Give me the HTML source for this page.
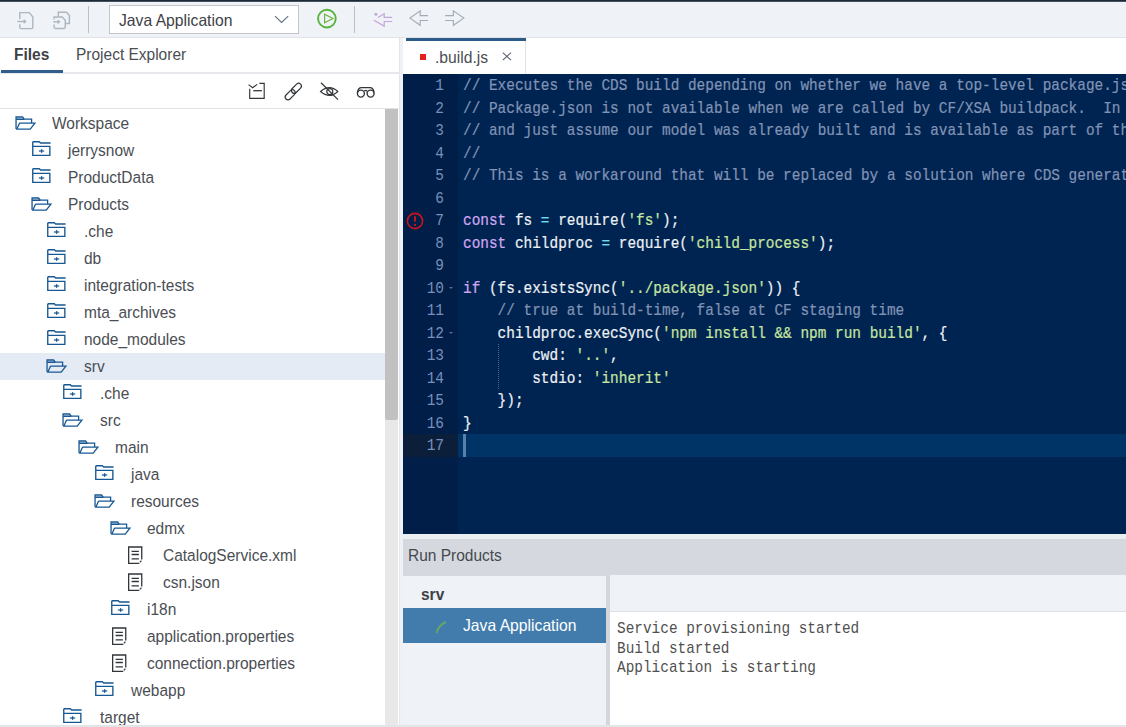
<!DOCTYPE html>
<html><head><meta charset="utf-8">
<style>
*{box-sizing:border-box;margin:0;padding:0}
html,body{width:1126px;height:727px;overflow:hidden;background:#fff;font-family:"Liberation Sans",sans-serif;color:#32363a}
.a{position:absolute}
#topline{left:0;top:0;width:1126px;height:2px;background:linear-gradient(#1b2835 0,#1b2835 60%,#8a939c 100%)}
#toolbar{left:0;top:2px;width:1126px;height:35.7px;background:#eff2f6;border-bottom:1.7px solid #dfe2e6}
.sep{width:1.2px;background:#b9c0c7;top:6px;height:27px}
#dd{left:109px;top:5px;width:190px;height:29px;background:#fff;border:1px solid #c3c6c9;font-size:16.5px;color:#3d4146}
#dd span{position:absolute;left:9.3px;top:5.1px;transform:scaleX(0.951);transform-origin:0 0;white-space:nowrap}
#left{left:0;top:37.7px;width:399px;height:690px;background:#fff}
#scroll{left:385px;top:109px;width:13.3px;height:618px;background:#e8e8e8}
#thumb{left:385px;top:109px;width:13.3px;height:311px;background:#c1c1c1;border-radius:0 0 2px 2px}
#gut{left:399.6px;top:37.7px;width:3.4px;height:690px;background:#eef1f5}
.tt{font-size:16.3px;line-height:27px;height:27px;color:#4a4e53;white-space:nowrap;transform:scaleX(0.951);transform-origin:0 0}
.s{transform:scaleX(0.951);transform-origin:0 0;white-space:nowrap}
.sel{background:#e4ebf5}
#code{left:403px;top:74px;width:723px;height:460px;background:#002451;overflow:hidden}
#gutter{left:0;top:0;width:55px;height:460px;background:#001e48}
.ln{position:absolute;left:0;width:41px;text-align:right;font-family:"Liberation Mono",monospace;font-size:15.7px;color:#7890bb;height:22.5px;line-height:25px;transform:scaleX(0.919);transform-origin:100% 0}
.cl{-webkit-text-stroke:0.2px currentColor;position:absolute;left:60px;font-family:"Liberation Mono",monospace;font-size:15.7px;color:#eef1f5;height:22.5px;line-height:25px;white-space:pre;transform:scaleX(0.919);transform-origin:0 0}
.fold{position:absolute;left:45.6px;width:0;height:0;border-left:2.2px solid transparent;border-right:2.2px solid transparent;border-top:2.4px solid #5a6d92;margin-top:10.3px}
.cm{color:#8293b5}.kw{color:#d3a8f2}.op{color:#72dbe9}.st{color:#c8e6a0}
#strip{left:403px;top:534px;width:723px;height:5px;background:#eceff2}
#runh{left:403px;top:539px;width:723px;height:37px;background:#d5d9df;font-size:16.3px;color:#3d4146}
#runl{left:403px;top:576px;width:203px;height:151px;background:#eff2f6}
#split{left:605.5px;top:576px;width:4.5px;height:151px;background:#d3d6da}
#runr{left:610px;top:575px;width:516px;height:36.5px;background:#eff2f6;border-bottom:1px solid #dde1e6}
#out{left:610px;top:611.5px;width:516px;height:113.5px;background:#fff;overflow:hidden}
#outt{position:absolute;left:6.5px;top:8.5px;font-family:"Liberation Mono",monospace;font-size:15.7px;color:#505050;white-space:pre;line-height:19.5px;transform:scaleX(0.919);transform-origin:0 0}
#bottomline{left:0;top:725px;width:1126px;height:2px;background:#e3e5e8}
.ti{position:absolute}
</style></head><body>
<div class="a" id="topline"></div>
<div class="a" id="toolbar"></div>
<!-- toolbar icons -->
<svg class="a" style="left:16px;top:10px" width="20" height="20" viewBox="0 0 20 20"><g fill="none" stroke="#adb7c2" stroke-width="1.45"><path d="M3.8 8.9V2.6H13.1L16.8 6.7V17.2Q16.8 18.6 15.4 18.6H5.2Q3.8 18.6 3.8 17.2V14.2"/><path d="M1.3 11.5H9.4"/><path d="M7.6 9.8L9.6 11.5L7.6 13.2" stroke-width="1.3"/></g></svg>
<svg class="a" style="left:52px;top:10px" width="20" height="20" viewBox="0 0 20 20"><g fill="none" stroke="#adb7c2" stroke-width="1.45"><path d="M6.3 6.7V2.3H14.4L17.4 5.6V13.5H13.3"/><path d="M2.1 9.4V6.9H10.2L13.3 10.2V17.1Q13.3 18.5 11.9 18.5H3.5Q2.1 18.5 2.1 17.1V14.6"/><path d="M1.2 11.8H7.4"/><path d="M5.6 10.2L7.6 11.8L5.6 13.4" stroke-width="1.3"/></g></svg>
<div class="a sep" style="left:88px"></div>
<div class="a" id="dd"><span>Java Application</span><svg class="a" style="left:163.5px;top:9px" width="16" height="9" viewBox="0 0 16 9"><path d="M1 1.2L7.6 7.4L14.2 1.2" fill="none" stroke="#5d6f82" stroke-width="1.1"/></svg></div>
<svg class="a" style="left:315.5px;top:8px" width="22" height="22" viewBox="0 0 22 22"><circle cx="10.9" cy="10.6" r="8.85" fill="none" stroke="#58b23c" stroke-width="1.9"/><path d="M8.6 6.2V14.8L16.9 10.5Z" fill="none" stroke="#6cb640" stroke-width="1.2" stroke-linejoin="miter"/></svg>
<div class="a sep" style="left:353.5px"></div>
<svg class="a" style="left:372px;top:11px" width="22" height="17" viewBox="0 0 22 17"><g fill="none" stroke="#c4a6d9" stroke-width="1.2"><path d="M6 6.4L12.2 2.8V6.4H20.2M20.2 10.5H12.2V15.1L1.9 9.2"/><circle cx="3.9" cy="3.3" r="0.9" fill="#c4a6d9"/></g></svg>
<svg class="a" style="left:409px;top:10px" width="21" height="17" viewBox="0 0 21 17"><path d="M19 5.6H11.2V0.9L1 8.1L11.2 15.3V10.5H19" fill="none" stroke="#a3acb6" stroke-width="1.15"/></svg>
<svg class="a" style="left:444px;top:10px" width="21" height="17" viewBox="0 0 21 17"><path d="M1.1 5.6H9.4V0.9L19.8 8.1L9.4 15.3V10.5H1.1" fill="none" stroke="#a3acb6" stroke-width="1.15"/></svg>

<div class="a" id="left"></div>
<div class="a" style="left:0;top:72px;width:399px;height:1.5px;background:#e6e8eb"></div>
<div class="a" style="left:398.5px;top:37.7px;width:1.2px;height:690px;background:#e2e5e9"></div>
<div class="a s" style="left:14px;top:45px;font-size:16.3px;font-weight:bold;color:#3d4146">Files</div>
<div class="a" style="left:1px;top:70px;width:61.5px;height:3px;background:#2f5e8d"></div>
<div class="a s" style="left:76.4px;top:45px;font-size:16.3px;color:#4a4e53">Project Explorer</div>
<!-- panel tools -->
<svg class="a" style="left:248px;top:82px" width="18" height="18" viewBox="0 0 18 18"><g fill="none" stroke="#32363a" stroke-width="1.15"><path d="M11.4 1.4H16.2V16.4H1.7V6.7"/><path d="M0.6 2.6L4.6 5.7L9.2 2.4"/><path d="M5.3 8.7H13.9" stroke-width="1.3"/></g></svg>
<svg class="a" style="left:280px;top:78px" width="26" height="26" viewBox="0 0 26 26"><g fill="none" stroke="#32363a" stroke-width="1.2"><rect x="4.3" y="14" width="11.8" height="5.6" rx="2.8" transform="rotate(-45 10.2 16.8)"/><rect x="10.5" y="7.5" width="11.8" height="5.6" rx="2.8" transform="rotate(-45 16.4 10.3)"/></g></svg>
<svg class="a" style="left:316px;top:78px" width="26" height="26" viewBox="0 0 26 26"><g fill="none" stroke="#32363a" stroke-width="1.2"><path d="M4.6 13.5Q13.5 5.6 21.8 13.5Q13.5 21.4 4.6 13.5Z"/><circle cx="13.8" cy="13.6" r="3"/><path d="M5 4.7L22 21.6"/></g></svg>
<svg class="a" style="left:355.5px;top:86px" width="20" height="13" viewBox="0 0 20 13"><g fill="none" stroke="#32363a" stroke-width="1.4"><circle cx="4.9" cy="7.6" r="3.5"/><circle cx="14.6" cy="7.6" r="3.5"/><path d="M1.5 6.8Q1.9 1.6 5.6 1.6H13.9Q17.6 1.6 18 6.8"/><path d="M8.4 5.2Q9.75 3.6 11.1 5.2"/></g></svg>
<div class="a" style="left:0;top:107.5px;width:399px;height:1.5px;background:#e2e2e2"></div>
<div class="a" id="scroll"></div>
<div class="a" id="thumb"></div>
<svg class="a" style="left:14.7px;top:116.1px" width="22" height="15" viewBox="0 0 22 15"><g fill="none" stroke="#175893" stroke-width="1.3"><path d="M1.05 13.1V1H7.6L9.2 3.2H16.6V7"/><path d="M1.05 3.2H9.2" stroke-width="1.6"/><path d="M4.5 7.05H19.9L15.24 13.1H1.05M4.6 7.05L2.1 12.6"/></g></svg>
<div class="a tt" style="left:51.9px;top:109.5px">Workspace</div>
<svg class="a" style="left:31.6px;top:140.9px" width="20" height="16" viewBox="0 0 20 16"><g fill="none" stroke="#175893" stroke-width="1.35"><path d="M0.75 0.75H7.3L8.6 2H18.6"/><path d="M0.75 0.75V14.4H17.85V5.3H0.75"/><path d="M6.9 10H12.2" stroke-width="1.2"/><path d="M9.6 8.2V11.8" stroke-width="1.35"/></g></svg>
<div class="a tt" style="left:67.8px;top:136.5px">jerrysnow</div>
<svg class="a" style="left:31.6px;top:167.9px" width="20" height="16" viewBox="0 0 20 16"><g fill="none" stroke="#175893" stroke-width="1.35"><path d="M0.75 0.75H7.3L8.6 2H18.6"/><path d="M0.75 0.75V14.4H17.85V5.3H0.75"/><path d="M6.9 10H12.2" stroke-width="1.2"/><path d="M9.6 8.2V11.8" stroke-width="1.35"/></g></svg>
<div class="a tt" style="left:67.8px;top:163.5px">ProductData</div>
<svg class="a" style="left:30.6px;top:197.1px" width="22" height="15" viewBox="0 0 22 15"><g fill="none" stroke="#175893" stroke-width="1.3"><path d="M1.05 13.1V1H7.6L9.2 3.2H16.6V7"/><path d="M1.05 3.2H9.2" stroke-width="1.6"/><path d="M4.5 7.05H19.9L15.24 13.1H1.05M4.6 7.05L2.1 12.6"/></g></svg>
<div class="a tt" style="left:67.8px;top:190.5px">Products</div>
<svg class="a" style="left:47.4px;top:221.9px" width="20" height="16" viewBox="0 0 20 16"><g fill="none" stroke="#175893" stroke-width="1.35"><path d="M0.75 0.75H7.3L8.6 2H18.6"/><path d="M0.75 0.75V14.4H17.85V5.3H0.75"/><path d="M6.9 10H12.2" stroke-width="1.2"/><path d="M9.6 8.2V11.8" stroke-width="1.35"/></g></svg>
<div class="a tt" style="left:83.6px;top:217.5px">.che</div>
<svg class="a" style="left:47.4px;top:248.9px" width="20" height="16" viewBox="0 0 20 16"><g fill="none" stroke="#175893" stroke-width="1.35"><path d="M0.75 0.75H7.3L8.6 2H18.6"/><path d="M0.75 0.75V14.4H17.85V5.3H0.75"/><path d="M6.9 10H12.2" stroke-width="1.2"/><path d="M9.6 8.2V11.8" stroke-width="1.35"/></g></svg>
<div class="a tt" style="left:83.6px;top:244.5px">db</div>
<svg class="a" style="left:47.4px;top:275.9px" width="20" height="16" viewBox="0 0 20 16"><g fill="none" stroke="#175893" stroke-width="1.35"><path d="M0.75 0.75H7.3L8.6 2H18.6"/><path d="M0.75 0.75V14.4H17.85V5.3H0.75"/><path d="M6.9 10H12.2" stroke-width="1.2"/><path d="M9.6 8.2V11.8" stroke-width="1.35"/></g></svg>
<div class="a tt" style="left:83.6px;top:271.5px">integration-tests</div>
<svg class="a" style="left:47.4px;top:302.9px" width="20" height="16" viewBox="0 0 20 16"><g fill="none" stroke="#175893" stroke-width="1.35"><path d="M0.75 0.75H7.3L8.6 2H18.6"/><path d="M0.75 0.75V14.4H17.85V5.3H0.75"/><path d="M6.9 10H12.2" stroke-width="1.2"/><path d="M9.6 8.2V11.8" stroke-width="1.35"/></g></svg>
<div class="a tt" style="left:83.6px;top:298.5px">mta_archives</div>
<svg class="a" style="left:47.4px;top:329.9px" width="20" height="16" viewBox="0 0 20 16"><g fill="none" stroke="#175893" stroke-width="1.35"><path d="M0.75 0.75H7.3L8.6 2H18.6"/><path d="M0.75 0.75V14.4H17.85V5.3H0.75"/><path d="M6.9 10H12.2" stroke-width="1.2"/><path d="M9.6 8.2V11.8" stroke-width="1.35"/></g></svg>
<div class="a tt" style="left:83.6px;top:325.5px">node_modules</div>
<div class="a sel" style="left:0;top:352.5px;width:385px;height:27px"></div>
<svg class="a" style="left:46.4px;top:359.1px" width="22" height="15" viewBox="0 0 22 15"><g fill="none" stroke="#175893" stroke-width="1.3"><path d="M1.05 13.1V1H7.6L9.2 3.2H16.6V7"/><path d="M1.05 3.2H9.2" stroke-width="1.6"/><path d="M4.5 7.05H19.9L15.24 13.1H1.05M4.6 7.05L2.1 12.6"/></g></svg>
<div class="a tt" style="left:83.6px;top:352.5px">srv</div>
<svg class="a" style="left:63.3px;top:383.9px" width="20" height="16" viewBox="0 0 20 16"><g fill="none" stroke="#175893" stroke-width="1.35"><path d="M0.75 0.75H7.3L8.6 2H18.6"/><path d="M0.75 0.75V14.4H17.85V5.3H0.75"/><path d="M6.9 10H12.2" stroke-width="1.2"/><path d="M9.6 8.2V11.8" stroke-width="1.35"/></g></svg>
<div class="a tt" style="left:99.5px;top:379.5px">.che</div>
<svg class="a" style="left:62.3px;top:413.1px" width="22" height="15" viewBox="0 0 22 15"><g fill="none" stroke="#175893" stroke-width="1.3"><path d="M1.05 13.1V1H7.6L9.2 3.2H16.6V7"/><path d="M1.05 3.2H9.2" stroke-width="1.6"/><path d="M4.5 7.05H19.9L15.24 13.1H1.05M4.6 7.05L2.1 12.6"/></g></svg>
<div class="a tt" style="left:99.5px;top:406.5px">src</div>
<svg class="a" style="left:78.1px;top:440.1px" width="22" height="15" viewBox="0 0 22 15"><g fill="none" stroke="#175893" stroke-width="1.3"><path d="M1.05 13.1V1H7.6L9.2 3.2H16.6V7"/><path d="M1.05 3.2H9.2" stroke-width="1.6"/><path d="M4.5 7.05H19.9L15.24 13.1H1.05M4.6 7.05L2.1 12.6"/></g></svg>
<div class="a tt" style="left:115.3px;top:433.5px">main</div>
<svg class="a" style="left:95.0px;top:464.9px" width="20" height="16" viewBox="0 0 20 16"><g fill="none" stroke="#175893" stroke-width="1.35"><path d="M0.75 0.75H7.3L8.6 2H18.6"/><path d="M0.75 0.75V14.4H17.85V5.3H0.75"/><path d="M6.9 10H12.2" stroke-width="1.2"/><path d="M9.6 8.2V11.8" stroke-width="1.35"/></g></svg>
<div class="a tt" style="left:131.2px;top:460.5px">java</div>
<svg class="a" style="left:94.0px;top:494.1px" width="22" height="15" viewBox="0 0 22 15"><g fill="none" stroke="#175893" stroke-width="1.3"><path d="M1.05 13.1V1H7.6L9.2 3.2H16.6V7"/><path d="M1.05 3.2H9.2" stroke-width="1.6"/><path d="M4.5 7.05H19.9L15.24 13.1H1.05M4.6 7.05L2.1 12.6"/></g></svg>
<div class="a tt" style="left:131.2px;top:487.5px">resources</div>
<svg class="a" style="left:109.9px;top:521.1px" width="22" height="15" viewBox="0 0 22 15"><g fill="none" stroke="#175893" stroke-width="1.3"><path d="M1.05 13.1V1H7.6L9.2 3.2H16.6V7"/><path d="M1.05 3.2H9.2" stroke-width="1.6"/><path d="M4.5 7.05H19.9L15.24 13.1H1.05M4.6 7.05L2.1 12.6"/></g></svg>
<div class="a tt" style="left:147.1px;top:514.5px">edmx</div>
<svg class="a" style="left:128.1px;top:546.1px" width="17" height="19" viewBox="0 0 17 19"><g fill="none" stroke="#32363a" stroke-width="1.3"><path d="M13.75 13.5V1H0.65V17.4H11.3"/><path d="M3.6 5.3H10.9M3.6 8.5H10.9M3.6 12.9H10.9" stroke-width="1.35"/><path d="M13.4 14.7L11.9 16.3" stroke-width="1.2"/></g></svg>
<div class="a tt" style="left:162.9px;top:541.5px">CatalogService.xml</div>
<svg class="a" style="left:128.1px;top:573.1px" width="17" height="19" viewBox="0 0 17 19"><g fill="none" stroke="#32363a" stroke-width="1.3"><path d="M13.75 13.5V1H0.65V17.4H11.3"/><path d="M3.6 5.3H10.9M3.6 8.5H10.9M3.6 12.9H10.9" stroke-width="1.35"/><path d="M13.4 14.7L11.9 16.3" stroke-width="1.2"/></g></svg>
<div class="a tt" style="left:162.9px;top:568.5px">csn.json</div>
<svg class="a" style="left:110.9px;top:599.9px" width="20" height="16" viewBox="0 0 20 16"><g fill="none" stroke="#175893" stroke-width="1.35"><path d="M0.75 0.75H7.3L8.6 2H18.6"/><path d="M0.75 0.75V14.4H17.85V5.3H0.75"/><path d="M6.9 10H12.2" stroke-width="1.2"/><path d="M9.6 8.2V11.8" stroke-width="1.35"/></g></svg>
<div class="a tt" style="left:147.1px;top:595.5px">i18n</div>
<svg class="a" style="left:112.3px;top:627.1px" width="17" height="19" viewBox="0 0 17 19"><g fill="none" stroke="#32363a" stroke-width="1.3"><path d="M13.75 13.5V1H0.65V17.4H11.3"/><path d="M3.6 5.3H10.9M3.6 8.5H10.9M3.6 12.9H10.9" stroke-width="1.35"/><path d="M13.4 14.7L11.9 16.3" stroke-width="1.2"/></g></svg>
<div class="a tt" style="left:147.1px;top:622.5px">application.properties</div>
<svg class="a" style="left:112.3px;top:654.1px" width="17" height="19" viewBox="0 0 17 19"><g fill="none" stroke="#32363a" stroke-width="1.3"><path d="M13.75 13.5V1H0.65V17.4H11.3"/><path d="M3.6 5.3H10.9M3.6 8.5H10.9M3.6 12.9H10.9" stroke-width="1.35"/><path d="M13.4 14.7L11.9 16.3" stroke-width="1.2"/></g></svg>
<div class="a tt" style="left:147.1px;top:649.5px">connection.properties</div>
<svg class="a" style="left:95.0px;top:680.9px" width="20" height="16" viewBox="0 0 20 16"><g fill="none" stroke="#175893" stroke-width="1.35"><path d="M0.75 0.75H7.3L8.6 2H18.6"/><path d="M0.75 0.75V14.4H17.85V5.3H0.75"/><path d="M6.9 10H12.2" stroke-width="1.2"/><path d="M9.6 8.2V11.8" stroke-width="1.35"/></g></svg>
<div class="a tt" style="left:131.2px;top:676.5px">webapp</div>
<svg class="a" style="left:63.3px;top:707.9px" width="20" height="16" viewBox="0 0 20 16"><g fill="none" stroke="#175893" stroke-width="1.35"><path d="M0.75 0.75H7.3L8.6 2H18.6"/><path d="M0.75 0.75V14.4H17.85V5.3H0.75"/><path d="M6.9 10H12.2" stroke-width="1.2"/><path d="M9.6 8.2V11.8" stroke-width="1.35"/></g></svg>
<div class="a tt" style="left:99.5px;top:703.5px">target</div>
<div class="a" id="gut"></div>

<!-- editor tab -->
<div class="a" style="left:406px;top:37.5px;width:120px;height:36px;background:#fff;border-right:1px solid #e3e3e3"></div>
<div class="a" style="left:406px;top:37.6px;width:120px;height:3.1px;background:#2c5b87"></div>
<div class="a" style="left:419.6px;top:54.1px;width:6.3px;height:6.3px;background:#e3201e"></div>
<div class="a s" style="left:435.3px;top:47.8px;font-size:16.5px;color:#4a4e53">.build.js</div>
<svg class="a" style="left:501.8px;top:52.2px" width="10" height="9" viewBox="0 0 10 9"><path d="M0.8 0.6L9 8.2M9 0.6L0.8 8.2" stroke="#5a6270" stroke-width="1.05"/></svg>

<div class="a" id="code"><div class="a" id="gutter"></div>
<div class="ln" style="top:0.0px">1</div>
<div class="cl" style="top:0.0px"><span class="cm">// Executes the CDS build depending on whether we have a top-level package.json.</span></div>
<div class="ln" style="top:22.5px">2</div>
<div class="cl" style="top:22.5px"><span class="cm">// Package.json is not available when we are called by CF/XSA buildpack.  In this case we don't do anything</span></div>
<div class="ln" style="top:45.0px">3</div>
<div class="cl" style="top:45.0px"><span class="cm">// and just assume our model was already built and is available as part of this DB app.</span></div>
<div class="ln" style="top:67.5px">4</div>
<div class="cl" style="top:67.5px"><span class="cm">//</span></div>
<div class="ln" style="top:90.0px">5</div>
<div class="cl" style="top:90.0px"><span class="cm">// This is a workaround that will be replaced by a solution where CDS generates the DB module.</span></div>
<div class="ln" style="top:112.5px">6</div>
<div class="cl" style="top:112.5px"></div>
<div class="ln" style="top:135.0px">7</div>
<svg class="a" style="left:2.8px;top:137.6px" width="18" height="18" viewBox="0 0 18 18"><circle cx="9" cy="9" r="7.6" fill="none" stroke="#c8141e" stroke-width="1.6"/><path d="M9 4.3V9.6" stroke="#d0141e" stroke-width="1.9"/><circle cx="9" cy="12.9" r="1.05" fill="#d0141e"/></svg>
<div class="cl" style="top:135.0px"><span class="kw">const</span> fs <span class="op">=</span> require(<span class="st">'fs'</span>);</div>
<div class="ln" style="top:157.5px">8</div>
<div class="cl" style="top:157.5px"><span class="kw">const</span> childproc <span class="op">=</span> require(<span class="st">'child_process'</span>);</div>
<div class="ln" style="top:180.0px">9</div>
<div class="cl" style="top:180.0px"></div>
<div class="ln" style="top:202.5px">10</div>
<div class="fold" style="top:202.5px"></div>
<div class="cl" style="top:202.5px"><span class="kw">if</span> (fs.existsSync(<span class="st">'../package.json'</span>)) {</div>
<div class="ln" style="top:225.0px">11</div>
<div class="cl" style="top:225.0px">    <span class="cm">// true at build-time, false at CF staging time</span></div>
<div class="ln" style="top:247.5px">12</div>
<div class="fold" style="top:247.5px"></div>
<div class="cl" style="top:247.5px">    childproc.execSync(<span class="st">'npm install &amp;&amp; npm run build'</span>, {</div>
<div class="ln" style="top:270.0px">13</div>
<div class="cl" style="top:270.0px">        cwd: <span class="st">'..'</span>,</div>
<div class="ln" style="top:292.5px">14</div>
<div class="cl" style="top:292.5px">        stdio: <span class="st">'inherit'</span></div>
<div class="ln" style="top:315.0px">15</div>
<div class="cl" style="top:315.0px">    });</div>
<div class="ln" style="top:337.5px">16</div>
<div class="cl" style="top:337.5px">}</div>
<div class="a" style="left:0;top:360.0px;width:55px;height:22.5px;background:#0b1f3b"></div>
<div class="a" style="left:55px;top:360.0px;width:668px;height:22.5px;background:#003366"></div>
<div class="a" style="left:60px;top:360.0px;width:2.5px;height:22.5px;background:#5a7fa8"></div>
<div class="ln" style="top:360.0px">17</div>
<div class="cl" style="top:360.0px"></div>
<div class="a" style="left:94.5px;top:270px;width:1px;height:45px;border-left:1px dotted #4b6488"></div>
</div>
<div class="a" id="strip"></div>
<div class="a" id="runh"><span class="a s" style="left:5.3px;top:7.3px;color:#45494e">Run Products</span></div>
<div class="a" id="runl">
<div class="a s" style="left:18.3px;top:9.3px;font-size:16.3px;font-weight:bold;color:#3d4146">srv</div>
<div class="a" style="left:0;top:32px;width:202.5px;height:35px;background:#427cad"></div>
<svg class="a" style="left:32px;top:44px" width="13" height="14" viewBox="0 0 13 14"><path d="M1.6 12.9Q3.4 5.4 10.9 2" fill="none" stroke="#62a66a" stroke-width="2"/></svg>
<div class="a s" style="left:59.5px;top:40.3px;font-size:16.5px;color:#fff">Java Application</div>
</div>
<div class="a" id="split"></div>
<div class="a" id="runr"></div>
<div class="a" id="out"><div id="outt">Service provisioning started
Build started
Application is starting</div></div>
<div class="a" id="bottomline"></div>
</body></html>
